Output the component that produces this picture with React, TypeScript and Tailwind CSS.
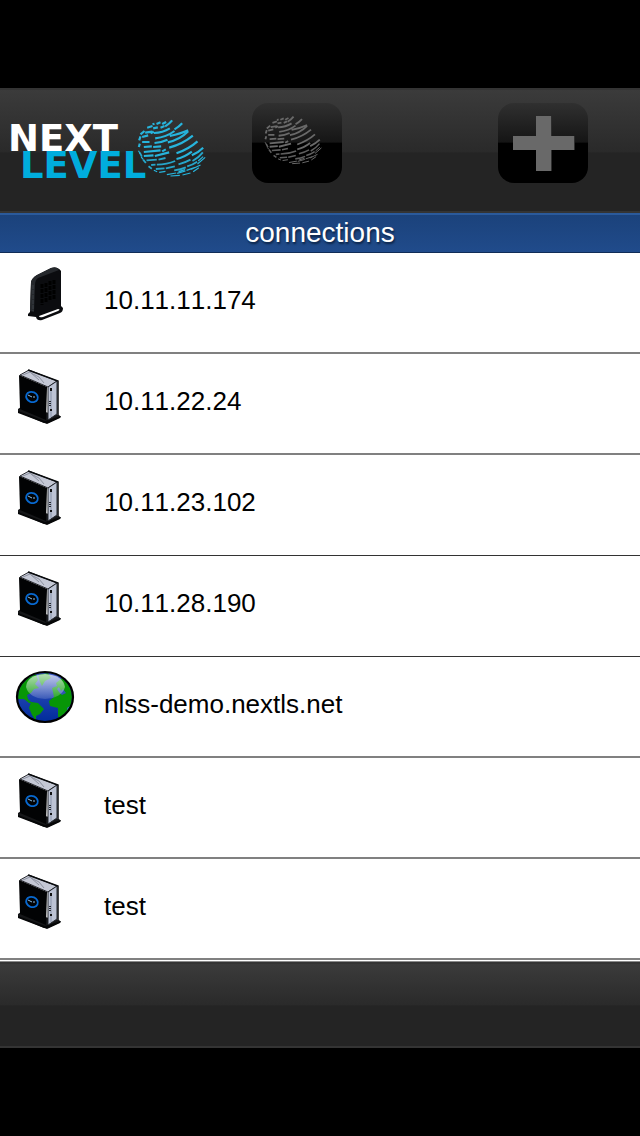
type IconProps = { className?: string };

function GlobeMark({ className }: IconProps) {
  return (
    <svg viewBox="20 32 206 174" className={className} fill="none" stroke="currentColor" strokeWidth="6.5" strokeLinecap="butt" aria-hidden="true">
      <path d="M104 54Q117 46 125 36M132 63Q146 55 155 45M95 47L107 41M78 47L90 42M66 48L72 46" />
      <path d="M68 60L82 57M90 58L102 53M50 58L66 53M70 74Q97 73 118 60M44 73L66 70M118 83Q151 76 173 66M74 90Q108 86 132 68" />
      <path d="M35 86L53 81M35 101H57M60 75L70 70M112 102Q149 94 173 69M30 78L42 68M26 96L30 84" />
      <path d="M72 104Q94 102 111 94M116 118Q157 107 187 82M40 116L64 114M68 116L92 114M138 135Q176 121 201 99M25 116L28 106" />
      <path d="M40 131L90 126M95 129L106 123M40 143L69 141M73 143L116 132M138 152Q160 148 184 130M184 141Q204 132 218 118" />
      <g className="opacity-90" strokeWidth="5.5">
        <path d="M48 156L79 154M84 154L105 149M79 169Q110 168 134 158M144 168Q166 162 180 154M186 158Q205 148 217 132M28 133L34 145" />
        <path d="M62 170L75 169M76 182L102 180M106 180L133 174M131 186Q151 184 166 177M170 174Q187 169 200 160M38 154L46 164M54 174L64 181" />
      </g>
      <path strokeWidth="3.5" d="M86 192L105 189M109 199L137 194M140 195L165 188M168 186L192 178M201 167L224 147M183 183L210 170M120 203L148 201M156 200L180 194M188 190L205 178M203 158L218 145M70 186L80 190M24 127L29 136M32 146L38 153M144 190L164 184" />
    </svg>
  );
}

function RouterIcon() {
  return (
    <svg viewBox="0 -2 100 100" className="size-full" aria-hidden="true">
      <path d="M31 27Q32 23 37 20L51 13Q58 11 61 16V51L63 53Q63 57 60 58L42 65Q37 66 36 62L28 61V59L30 57Z" fill="#0b0c0f" />
      <path d="M31 27Q32 23 37 20L51 13Q57 11 59 15L38 23Q35 25 35 30L34 57L30 56Z" fill="#25282c" />
      <path d="M33 30V56" stroke="#3b3f44" strokeDasharray="4 1" />
      <path d="M42 29V50M46 28V48M50 26V46M54 25V44" stroke="#000" strokeWidth="3" strokeDasharray="4 1" />
      <path d="M39 61L58 54Q61 54 58 56L43 62Q39 63 39 61Z" fill="#fff" />
    </svg>
  );
}

function ServerIcon() {
  return (
    <svg viewBox="0 -2 100 100" className="size-full" aria-hidden="true">
      <path d="M18 53L21 51L59 59L61 61L48 67L44 67L18 56Z" fill="#151618" />
      <path d="M18 55L45 65L61 60L60 62L47 68L18 57Z" fill="#050607" />
      <path d="M20 19L29 14L57 25L48 31Z" fill="#c4c8d5" stroke="#292b31" />
      <path d="M23 19L30 16L39 24M31 17L39 21L44 27" fill="none" stroke="#8d92a0" />
      <path d="M48 31L57 25V58L48 64Z" fill="#bcc3d4" stroke="#20242a" />
      <path d="M19 19L47 31L46 64L20 53Z" fill="#020304" />
      <path d="M28 14L58 25V59" fill="none" stroke="#080a0c" strokeWidth="1.5" />
      <path d="M51 33V61" stroke="#8994aa" />
      <path d="M51 32V35M51 53V55" stroke="#111" strokeWidth="2" />
      <path d="M50 45V51" stroke="#24272d" strokeWidth="2" strokeDasharray="1 1" />
      <ellipse cx="32" cy="41" rx="6" ry="5" transform="rotate(24 32 41)" fill="none" stroke="#0869d0" strokeWidth="1.8" />
      <path d="M28 39L32 41M34 42V40" stroke="#8ebfe5" />
    </svg>
  );
}

function EarthIcon() {
  return (
    <svg viewBox="0 2 100 100" className="size-full" aria-hidden="true">
      <defs>
        <linearGradient id="ocean" x2="0" y2="1">
          <stop stopColor="#3855bf" />
          <stop offset="1" stopColor="#002b9b" />
        </linearGradient>
        <linearGradient id="shine" x2="0" y2="1">
          <stop stopColor="#fff" stopOpacity=".7" />
          <stop offset="1" stopColor="#fff" stopOpacity=".14" />
        </linearGradient>
        <clipPath id="earth"><ellipse cx="45" cy="42" rx="27" ry="24" /></clipPath>
      </defs>
      <ellipse cx="45" cy="42" rx="28" ry="25" fill="url(#ocean)" />
      <g clipPath="url(#earth)" fill="#079607">
        <path d="M16 42L20 27L28 20L36 19L38 25L35 29L39 33L34 34L31 38L27 40L28 44L32 48L29 48L24 44L18 44Z" />
        <path d="M31 47L38 48L44 54L40 59L36 61L36 66L32 60L29 53Z" />
        <path d="M38 20L48 18L51 23L45 26L42 31L40 27Z" />
        <path d="M53 37L52 33L57 31L56 28L62 23L67 27L73 39V58L63 64L58 62L58 53L50 51L49 46L54 42Z" />
        <path d="M57 34L59 32L61 36L63 34L66 38L62 40L59 37Z" fill="#3155b4" />
        <path d="M67 53L70 51L68 57Z" fill="#3b75bd" />
      </g>
      <path d="M26 32Q27 20 45 19Q63 20 65 32Q62 43 45 44Q29 43 26 32Z" fill="url(#shine)" />
      <ellipse cx="45" cy="42" rx="28" ry="25" fill="none" stroke="#000" strokeWidth="2.2" />
    </svg>
  );
}

const icons = { router: RouterIcon, server: ServerIcon, earth: EarthIcon };

const connections: { name: string; kind: keyof typeof icons }[] = [
  { name: "10.11.11.174", kind: "router" },
  { name: "10.11.22.24", kind: "server" },
  { name: "10.11.23.102", kind: "server" },
  { name: "10.11.28.190", kind: "server" },
  { name: "nlss-demo.nextls.net", kind: "earth" },
  { name: "test", kind: "server" },
  { name: "test", kind: "server" },
];

const toolButton =
  "flex h-20 w-[90px] shrink-0 justify-center rounded-2xl bg-[linear-gradient(#303030_0%,#151515_49%,#000_50%)] text-[#696969]";

export default function App() {
  return (
    <div className="flex min-h-screen flex-col bg-black pt-[88px] font-['Liberation_Sans',Arial,sans-serif] [font-kerning:none]">
      <header className="flex h-[125px] items-start border-y-2 border-[#343434] bg-[linear-gradient(#3b3b3b_0%,#2a2a2a_51%,#242424_52%)] pt-[13px]">
        <div className="flex w-[252px] shrink-0 pt-4 pl-2">
          <h1 className="flex w-[129px] shrink-0 flex-col pt-1.5 font-['DejaVu_Sans',sans-serif] text-[37px] leading-[27px] font-bold">
            <span className="text-white">NEXT</span>
            <span className="pl-3 text-[#00addd]">LEVEL</span>
          </h1>
          <GlobeMark className="h-[58px] w-[69px] shrink-0 text-[#27b4dc]" />
        </div>
        <button type="button" aria-label="Connections" className={toolButton}>
          <GlobeMark className="mt-3 mr-2 h-[50px] w-[58px]" />
        </button>
        <button type="button" aria-label="Add connection" className={`${toolButton} mr-[52px] ml-auto`}>
          <svg viewBox="0 0 62 56" className="mt-3 ml-0.5 h-14 w-[62px]" aria-hidden="true">
            <path d="M24 1H39V21H62V35H39V56H24V35H1V21H24Z" fill="#2d2d2d" />
            <path d="M23 1H38V21H61V35H38V56H23V35H0V21H23Z" fill="#696969" />
          </svg>
        </button>
      </header>
      <h2 className="h-10 border-t-2 border-b border-t-[#2b5a9b] border-b-[#102c57] bg-linear-to-b from-[#1b427b] to-[#204b8b] text-center text-[28px] leading-9 text-white [text-shadow:1px_2px_2px_#0b2345]">
        connections
      </h2>
      <ul className="border-b border-[#8a8a8a] bg-white pb-px">
        {connections.map(({ name, kind }, i) => {
          const Icon = icons[kind];
          return (
            <li key={i} className="h-[101px] border-b-2 border-[#808080] nth-[3]:border-b nth-[3]:border-[#333] nth-[4]:border-b nth-[4]:border-[#333]">
              <a href="#" className="flex h-full items-center text-[26px] leading-8 text-black">
                <span className="mr-1 size-[100px] shrink-0"><Icon /></span>
                <span className="pb-1.5">{name}</span>
              </a>
            </li>
          );
        })}
      </ul>
      <footer className="h-[86px] border-y-2 border-[#343434] bg-[linear-gradient(#3b3b3b_0%,#2a2a2a_50%,#242424_51%)]" />
    </div>
  );
}
